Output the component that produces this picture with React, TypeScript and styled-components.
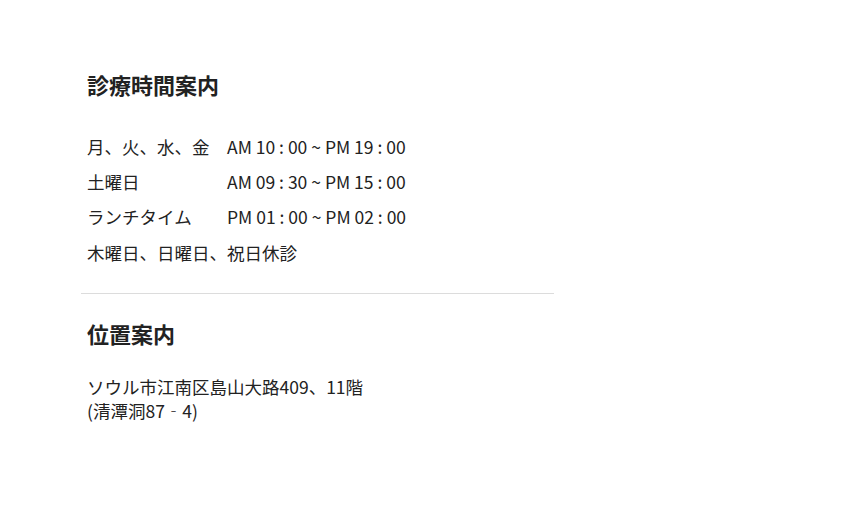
import { Fragment } from "react";
import styled, { createGlobalStyle } from "styled-components";

const GlobalStyle = createGlobalStyle`
  body {
    margin: 0;
    background: #fff;
    font-family: "Noto Sans CJK JP", "Noto Sans", sans-serif;
    color: #222;
  }
`;

const Page = styled.main`
  padding: 62px 0 0 81px;
`;

const Section = styled.section<{ $divider?: boolean }>`
  width: 473px;
  padding: 0 6px;
  box-sizing: border-box;
  border-bottom: ${({ $divider }) => ($divider ? "1px solid #dcdcdc" : "none")};
  padding-bottom: ${({ $divider }) => ($divider ? "24px" : "0")};
`;

const Title = styled.h2<{ $top?: number }>`
  margin: ${({ $top }) => $top ?? 0}px 0 0;
  font-size: 22px;
  line-height: 44px;
  font-weight: 700;
  color: #222;
`;

const Schedule = styled.dl`
  margin: 23px 0 0;
  display: grid;
  grid-template-columns: 140px auto;
  grid-auto-rows: 35px;
  align-items: center;
  font-size: 17.5px;
`;

const Day = styled.dt`
  margin: 0;
`;

const Hours = styled.dd`
  margin: 0;
`;

const Closed = styled.p`
  margin: 0;
  grid-column: 1 / -1;
  line-height: 38px;
  padding-top: 2px;
`;

const Address = styled.p`
  margin: 20px 0 0;
  font-size: 17.5px;
  line-height: 24px;
`;

const rows = [
  { day: "月、火、水、金", hours: "AM 10 : 00 ~ PM 19 : 00" },
  { day: "土曜日", hours: "AM 09 : 30 ~ PM 15 : 00" },
  { day: "ランチタイム", hours: "PM 01 : 00 ~ PM 02 : 00" },
];

const App = () => (
  <Page>
    <GlobalStyle />
    <Section $divider>
      <Title>診療時間案内</Title>
      <Schedule>
        {rows.map((r) => (
          <Fragment key={r.day}>
            <Day>{r.day}</Day>
            <Hours>{r.hours}</Hours>
          </Fragment>
        ))}
        <Closed>木曜日、日曜日、祝日休診</Closed>
      </Schedule>
    </Section>
    <Section>
      <Title $top={17}>位置案内</Title>
      <Address>
        ソウル市江南区島山大路409、11階
        <br />
        (清潭洞87‐4)
      </Address>
    </Section>
  </Page>
);

export default App;
